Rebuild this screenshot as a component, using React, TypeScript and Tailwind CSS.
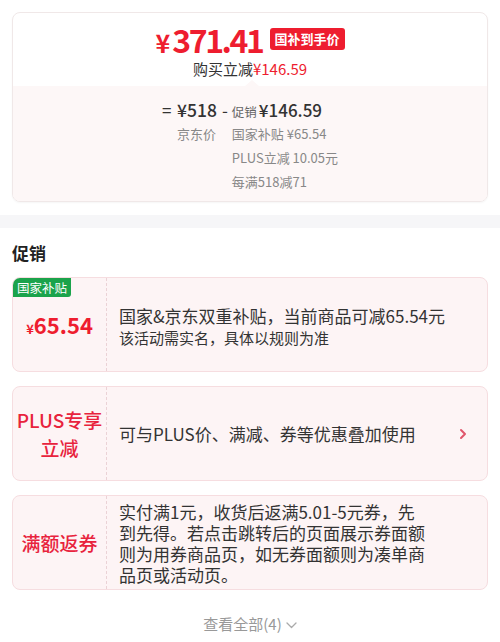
import React from "react";

const RED = "text-[#ee1d2f]";

function PromoCard({
  left,
  children,
  badge,
  chevron,
}: {
  left: React.ReactNode;
  children: React.ReactNode;
  badge?: string;
  chevron?: boolean;
}) {
  return (
    <div className="relative flex h-[95px] rounded-[8px] border border-[#f6dde0] bg-[#fdf4f5] overflow-hidden">
      {badge && (
        <div className="absolute left-0 top-0 h-[19px] px-[4px] bg-[#1ba34b] text-white text-[12.5px] leading-[19px] rounded-br-[3px]">
          {badge}
        </div>
      )}
      <div className="w-[94px] shrink-0 flex items-center justify-center border-r border-dashed border-[#ebd2d6]">
        {left}
      </div>
      <div className="flex-1 flex items-center justify-between pl-[12px] pr-[20px]">
        <div className="text-[#333]">{children}</div>
        {chevron && (
          <svg width="8" height="12" viewBox="0 0 8 12" className="shrink-0">
            <polyline
              points="2,2 6,6 2,10"
              fill="none"
              stroke="#e0566c"
              strokeWidth="2"
              strokeLinecap="round"
              strokeLinejoin="round"
            />
          </svg>
        )}
      </div>
    </div>
  );
}

export default function App() {
  return (
    <div className="w-[500px] h-[642px] bg-white overflow-hidden font-['Noto_Sans_CJK_SC','Noto_Sans',sans-serif]">
      {/* Price card */}
      <div className="px-3 pt-3">
        <div className="rounded-[8px] border border-[#f0e8e8] overflow-hidden shadow-[0_1px_2px_rgba(0,0,0,0.04)]">
          <div className="h-[73px] flex flex-col items-center pt-[6px]">
            <div className="flex items-baseline h-[40px]">
              <span className={`${RED} font-bold text-[25px] leading-[40px] mr-[2px]`}>¥</span>
              <span className={`${RED} font-bold text-[32px] leading-[40px] tracking-[-2.4px]`}>371.41</span>
              <span className="self-center ml-[7px] bg-[#ee1d2f] text-white text-[13px] font-bold leading-[22px] px-[5px] rounded-[3px]">
                国补到手价
              </span>
            </div>
            <div className="text-[15px] leading-[20px] text-[#333]">
              购买立减<span className={RED}>¥146.59</span>
            </div>
          </div>
          <div className="relative bg-[#fdf7f7] pt-[12px] pb-[7px] pl-[149px]">
            <div className="absolute top-[-6px] left-[232px] w-0 h-0 border-x-[7px] border-x-transparent border-b-[6px] border-b-[#fdf7f7]" />
            <div className="flex items-start text-[#333]">
              <span className="text-[17px] leading-[24px] w-[15px]">=</span>
              <div className="flex flex-col">
                <span className="text-[17.5px] leading-[24px] font-medium">¥518</span>
                <span className="text-[13px] leading-[24px] text-[#888]">京东价</span>
              </div>
              <span className="text-[17px] leading-[24px] ml-[5px] mr-[4px]">-</span>
              <div className="flex flex-col">
                <div className="flex items-baseline h-[24px]">
                  <span className="text-[12.5px] leading-[24px] text-[#666]">促销</span>
                  <span className="text-[17px] leading-[24px] font-medium ml-[2px]">¥146.59</span>
                </div>
                <span className="text-[13px] leading-[24px] text-[#888]">国家补贴 ¥65.54</span>
                <span className="text-[13px] leading-[24px] text-[#888]">PLUS立减 10.05元</span>
                <span className="text-[13px] leading-[24px] text-[#888]">每满518减71</span>
              </div>
            </div>
          </div>
        </div>
      </div>

      <div className="mt-[13px] h-[13px] bg-[#f6f6f8]" />

      {/* Promotions */}
      <div className="px-3 pt-[14px]">
        <div className="text-[17px] leading-[22px] font-bold text-[#222]">促销</div>
        <div className="mt-[13px] flex flex-col gap-[14px]">
          <PromoCard
            badge="国家补贴"
            left={
              <div className={`${RED} font-bold flex items-baseline`}>
                <span className="text-[13px]">¥</span>
                <span className="text-[22px] leading-[28px]">65.54</span>
              </div>
            }
          >
            <div className="text-[17px] leading-[22px] mt-[4px]">国家&amp;京东双重补贴，当前商品可减65.54元</div>
            <div className="text-[15px] leading-[21px]">该活动需实名，具体以规则为准</div>
          </PromoCard>

          <PromoCard
            chevron
            left={
              <div className="text-[#e8233d] text-[19px] leading-[28px] font-medium text-center">
                PLUS专享
                <br />
                立减
              </div>
            }
          >
            <div className="text-[17px] leading-[22px]">可与PLUS价、满减、券等优惠叠加使用</div>
          </PromoCard>

          <PromoCard
            left={<div className="text-[#e8233d] text-[19px] leading-[28px] font-medium">满额返券</div>}
          >
            <div className="text-[17px] leading-[21px] whitespace-nowrap">
              <div>实付满1元，收货后返满5.01-5元券，先</div>
              <div>到先得。若点击跳转后的页面展示券面额</div>
              <div>则为用券商品页，如无券面额则为凑单商</div>
              <div>品页或活动页。</div>
            </div>
          </PromoCard>
        </div>

        <div className="mt-[24px] flex items-center justify-center text-[15px] leading-[20px] text-[#999]">
          <span>查看全部(4)</span>
          <svg width="11" height="7" viewBox="0 0 11 7" className="ml-[4px] mt-[2px]">
            <polyline points="1,1 5.5,5.5 10,1" fill="none" stroke="#aaa" strokeWidth="1.3" strokeLinecap="round" strokeLinejoin="round" />
          </svg>
        </div>
      </div>
    </div>
  );
}
